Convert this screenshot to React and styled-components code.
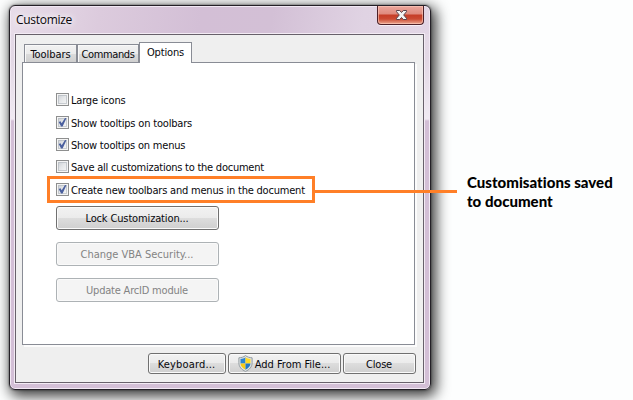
import React from "react";
import styled, { createGlobalStyle, css } from "styled-components";

const Global = createGlobalStyle`
  * { box-sizing: border-box; }
  body { margin: 0; background: #fdfefe; }
`;

const tahoma = css`
  font-family: "DejaVu Sans Condensed", "DejaVu Sans", sans-serif;
  font-stretch: condensed;
  font-size: 11px;
`;

const Page = styled.div`
  position: relative;
  display: flex;
  width: 633px;
  height: 400px;
  padding: 5px 0 0 9px;
  overflow: hidden;
  background: #fdfefe;
`;

const Dialog = styled.section`
  display: flex;
  flex-direction: column;
  flex: none;
  width: 422px;
  height: 385px;
  padding: 0 5px 5px;
  border: 1px solid #242027;
  border-radius: 6px;
  background:
    linear-gradient(100deg, #e8dde9 0, #dccbdd 90px, #d3bfd6 190px, #d3c0d6 260px, #e0d3e3 350px, #e2d6e5 100%) 0 0 / 100% 28px no-repeat,
    linear-gradient(#e5dae7 0, #e3d8e5 55px, #f0eaf2 113px, #d3bfd6 115px, #d3bfd6 100%);
  box-shadow:
    inset 0 0 0 1px #f2e9f4,
    0 0 2px rgba(0, 0, 0, 0.65),
    3px 4px 14px 2px rgba(0, 0, 0, 0.78);
`;

const TitleBar = styled.header`
  display: flex;
  justify-content: space-between;
  flex: none;
  height: 28px;
`;

const Title = styled.h1`
  margin: 6px 0 0 1px;
  font: 400 12px/16px "Open Sans", "Noto Sans", sans-serif;
  letter-spacing: ${(p) => p.$spacing};
  color: #0a080b;
  text-shadow: 0 0 6px #fff, 0 0 8px #fff;
`;

const CloseButton = styled.button`
  display: flex;
  align-items: center;
  justify-content: center;
  width: 47px;
  height: 19px;
  margin-right: 1px;
  padding: 0 0 1px 1px;
  border: 1px solid #4c2028;
  border-top: 0;
  border-radius: 0 0 4px 4px;
  background: linear-gradient(#eba79d 0, #df8a7d 8px, #c63d27 9px, #cb4a32 13px, #eca891 100%);
  box-shadow: inset 0 0 0 1px rgba(255, 205, 190, 0.6), 0 1px 0 #f6eff7;
`;

const Client = styled.div`
  display: flex;
  flex-direction: column;
  width: 409px;
  height: 349px;
  padding: 7px 6px 0;
  border: 1px solid #67606a;
  background: #efefef;
  box-shadow: 0 0 0 1px #f3ebf4;
`;

const Tabs = styled.nav`
  position: relative;
  z-index: 1;
  display: flex;
  align-items: flex-end;
  height: 21px;
  padding-left: 2px;
`;

const Tab = styled.button`
  ${tahoma}
  display: flex;
  align-items: center;
  justify-content: center;
  width: ${(p) => p.$width}px;
  height: ${(p) => (p.$active ? 21 : 19)}px;
  margin: 0;
  padding: ${(p) => (p.$active ? "0 0 1px" : "1px 0 0")};
  border: 1px solid #898c95;
  border-bottom: ${(p) => (p.$active ? "0" : "1px solid #898c95")};
  background: ${(p) => (p.$active ? "#fff" : "linear-gradient(#f2f2f2 0, #ebebeb 50%, #dcdcdc 51%, #cfcfcf 100%)")};
  box-shadow: ${(p) => (p.$active ? "none" : "inset 1px 1px 0 #f9f9f9")};
  color: #08080c;
  letter-spacing: ${(p) => p.$spacing || "0"};
  white-space: nowrap;
`;

const Panel = styled.div`
  width: 393px;
  height: 283px;
  margin-top: -1px;
  padding: 30px 0 0 33px;
  border: 1px solid #898c95;
  background: #fff;
  box-shadow: 2px 2px 0 #fcfcfc;
`;

const Options = styled.div`
  display: grid;
  grid-template-rows: 23px 22px 22px 23px 13px;
`;

const Option = styled.label`
  ${tahoma}
  display: flex;
  align-items: flex-start;
  height: 13px;
  line-height: 15px;
  gap: 2px;
  color: #08080c;
  letter-spacing: ${(p) => p.$spacing || "0"};
  white-space: nowrap;
`;

const Box = styled.span`
  display: block;
  flex: none;
  width: 13px;
  height: 13px;
  border: 1px solid #8e8f8f;
  background: linear-gradient(135deg, #c6cad0 0, #e5e7e9 48%, #fafafa 100%) padding-box;
  box-shadow: inset 0 0 0 1px #f5f5f5, inset 0 0 0 2px rgba(178, 184, 190, 0.65);

  svg { display: block; }
`;

const Stack = styled.div`
  display: grid;
  gap: 12px;
  margin-top: 10px;
`;

const Button = styled.button`
  ${tahoma}
  display: flex;
  align-items: center;
  justify-content: center;
  gap: 2px;
  width: ${(p) => p.$width}px;
  height: ${(p) => p.$height}px;
  padding: 1px 1px 0 0;
  border: 1px solid #707070;
  border-radius: 3px;
  background: linear-gradient(#f2f2f2 0, #ebebeb 49%, #dddddd 50%, #cfcfcf 100%);
  box-shadow: inset 0 0 0 1px #fafafa;
  color: #08080c;
  letter-spacing: ${(p) => p.$spacing || "0"};
  white-space: nowrap;

  svg { flex: none; margin-top: -1px; }

  &:disabled {
    border-color: #adb2b5;
    background: #f4f4f4;
    color: #838383;
  }
`;

const Footer = styled.footer`
  display: flex;
  gap: 2px;
  margin: 8px 0 0 126px;
`;

const Highlight = styled.div`
  position: absolute;
  left: 47px;
  top: 176px;
  z-index: 2;
  width: 268px;
  height: 27px;
  border: 3px solid #ff7f27;
`;

const Connector = styled.div`
  position: absolute;
  left: 315px;
  top: 190px;
  z-index: 2;
  width: 142px;
  height: 3px;
  background: #ff7f27;
`;

const Note = styled.p`
  margin: 168px 0 0 36px;
  font: 900 15px/19px Lato, "Open Sans", sans-serif;
  font-variant-ligatures: none;
  letter-spacing: ${(p) => p.$spacing};
  color: #000;
  white-space: nowrap;
`;

const Cross = () => (
  <svg width="13" height="12" viewBox="0 0 13 12">
    <path d="M1.5 1.5h3.2l1.8 2 1.8-2h3.2v1.2L8.7 6l2.8 3.3v1.2H8.3l-1.8-2-1.8 2H1.5V9.3L4.3 6 1.5 2.7z" fill="#f4f4f4" stroke="#59434c" strokeWidth="1" />
  </svg>
);

const Tick = () => (
  <svg width="11" height="11" viewBox="0 0 11 11">
    <path d="M1.7 5.1 3.5 4.2 4.7 6.3 8 1 9.4 1.2 5.6 9.6 4.1 9.6z" fill="#4a5f9e" />
  </svg>
);

const Shield = () => (
  <svg width="15" height="17" viewBox="0 0 15 17">
    <path d="M7.5.6C5.5 2.1 3.5 2.7.9 2.8v5c0 4 2.5 6.8 6.6 8.6 4.1-1.8 6.6-4.6 6.6-8.6v-5C11.5 2.7 9.5 2.1 7.5.6z" fill="#e2e5e6" stroke="#929b9f" strokeWidth="1" />
    <path d="M7.5 2.3C6 3.3 4.5 3.9 2.5 4v4.5h5z" fill="#2d85d2" />
    <path d="M7.5 2.3C9 3.3 10.5 3.9 12.5 4v4.5h-5z" fill="#ffda25" />
    <path d="M2.5 8.5h5v6.2C4.5 13.2 2.7 11.2 2.5 8.5z" fill="#f7cb18" />
    <path d="M12.5 8.5h-5v6.2c3-1.5 4.8-3.5 5-6.2z" fill="#2478c6" />
  </svg>
);

const options = [
  { label: "Large icons", spacing: "-0.2px" },
  { label: "Show tooltips on toolbars", spacing: "-0.18px", checked: true },
  { label: "Show tooltips on menus", spacing: "-0.2px", checked: true },
  { label: "Save all customizations to the document", spacing: "-0.24px" },
  { label: "Create new toolbars and menus in the document", spacing: "-0.2px", checked: true },
];

export default function App() {
  return (
    <>
      <Global />
      <Page>
        <Dialog>
          <TitleBar>
            <Title $spacing="-0.3px">Customize</Title>
            <CloseButton aria-label="Close window"><Cross /></CloseButton>
          </TitleBar>
          <Client>
            <Tabs>
              <Tab $width={53} $spacing="-0.05px">Toolbars</Tab>
              <Tab $width={62} $spacing="-0.4px">Commands</Tab>
              <Tab $width={53} $spacing="-0.15px" $active>Options</Tab>
            </Tabs>
            <Panel>
              <Options>
                {options.map((o) => (
                  <Option key={o.label} $spacing={o.spacing}>
                    <Box>{o.checked && <Tick />}</Box>
                    {o.label}
                  </Option>
                ))}
              </Options>
              <Stack>
                <Button $width={163} $height={24} $spacing="-0.14px">Lock Customization...</Button>
                <Button $width={163} $height={24} disabled>Change VBA Security...</Button>
                <Button $width={163} $height={24} $spacing="-0.2px" disabled>Update ArcID module</Button>
              </Stack>
            </Panel>
            <Footer>
              <Button $width={78} $height={21} $spacing="0.15px">Keyboard...</Button>
              <Button $width={113} $height={21}><Shield />Add From File...</Button>
              <Button $width={73} $height={21} $spacing="-0.2px">Close</Button>
            </Footer>
          </Client>
        </Dialog>
        <Note $spacing="0.02px">Customisations saved<br />to document</Note>
        <Highlight />
        <Connector />
      </Page>
    </>
  );
}
